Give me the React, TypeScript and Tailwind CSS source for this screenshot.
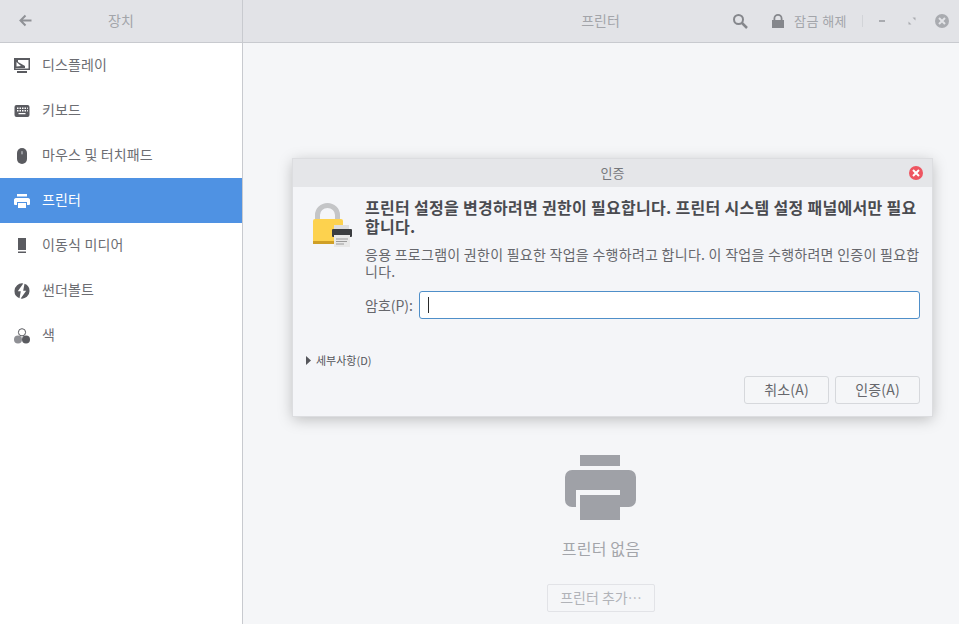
import { ReactNode } from "react";

const font = { fontFamily: '"Noto Sans CJK KR", "Noto Sans", sans-serif' };

const DisplayIcon = () => (
  <svg width="16" height="16" viewBox="0 0 16 16" fill="#5a5b60">
    <path fillRule="evenodd" d="M0 0h16v12H0zM1.500 1.500v9h13v-9z" />
    <path d="M1 1h14v1H4v2l7 4v2H1zM3 13h10v2H3z" />
    <path d="M2.500 4v4.500l4.500-0.500z" fill="#fff" />
  </svg>
);

const KeyboardIcon = () => (
  <svg width="16" height="16" viewBox="0 0 16 16">
    <rect x="0.500" y="2" width="15" height="12" rx="2" fill="#5a5b60" />
    <path
      d="M3 4.500h1.500v1.500H3zM5.500 4.500H7v1.500H5.500zM8 4.500h1.500v1.500H8zM10.500 4.500H12v1.500h-1.500zM13 4.500h.8v1.500H13zM3 7h1.500v1.500H3zM5.500 7H7v1.500H5.500zM8 7h1.500v1.500H8zM10.500 7H12v1.500h-1.500zM13 7h.8v1.500H13zM4.500 10h7v1.200h-7z"
      fill="#fff"
    />
  </svg>
);

const MouseIcon = () => (
  <svg width="16" height="16" viewBox="0 0 16 16">
    <rect x="3" y="0" width="10" height="16" rx="5" fill="#5a5b60" />
    <rect x="7.200" y="3" width="1.600" height="3.500" rx="0.800" fill="#a9abb0" />
  </svg>
);

const PrinterIcon = ({ color }: { color: string }) => (
  <svg width="16" height="16" viewBox="0 0 16 16" fill={color}>
    <path d="M3 1h10v2.500H3zM2 5h12a2 2 0 0 1 2 1.500V11a1 1 0 0 1-1 1h-2V9H3v3H1a1 1 0 0 1-1-1V6.500A2 2 0 0 1 2 5zM4 10h8v5H4z" />
  </svg>
);

const MediaIcon = () => (
  <svg width="16" height="16" viewBox="0 0 16 16" fill="#5a5b60">
    <path d="M4 0h8v12H4zM4 13.500h8V15H4z" />
  </svg>
);

const BoltIcon = () => (
  <svg width="16" height="16" viewBox="0 0 16 16" fill="#5a5b60">
    <path d="M9.300.500 3.800 8.300h3L5.500 15.300A7.500 7.500 0 0 1 .500 8 7.500 7.500 0 0 1 9.300.500zM10.500.800A7.500 7.500 0 0 1 15.500 8a7.500 7.500 0 0 1-8.800 7.500l5.500-7.800h-3z" />
  </svg>
);

const ColorIcon = () => (
  <svg width="16" height="16" viewBox="0 0 16 16">
    <circle cx="8" cy="4.300" r="3.600" fill="#fff" stroke="#5a5b60" />
    <circle cx="4" cy="11.500" r="4" fill="#8f9095" />
    <circle cx="12" cy="11.500" r="4" fill="#5a5b60" />
  </svg>
);

const SidebarRow = ({ icon, label, active }: { icon: ReactNode; label: string; active?: boolean }) => (
  <div
    className={`flex items-center h-[45px] pl-[14px] gap-3 text-[14px] tracking-[0.15px] ${
      active ? "bg-[#4f92e3] text-white" : "text-[#6c6d72]"
    }`}
  >
    {icon}
    <span className="-mt-[2px]">{label}</span>
  </div>
);

const DialogButton = ({ label }: { label: string }) => (
  <div className="flex items-center justify-center w-[85px] h-[28px] border border-[#d6d8dc] rounded-[3px] bg-[#f5f6f8] text-[14px] tracking-[0.2px] text-[#66676c]">
    {label}
  </div>
);

const App = () => {
  return (
    <div style={font} className="relative w-[959px] h-[624px] overflow-hidden bg-[#f5f6f8]">
      <div className="flex h-[43px] bg-[#e2e3e7] border-b border-[#c8cacf]">
        <div className="relative flex items-center justify-center w-[243px] pb-[2px] border-r border-[#c8cacf] text-[14px] text-[#a3a5aa]">
          <svg className="absolute left-[18px] top-[13px]" width="15" height="15" viewBox="0 0 15 15" fill="none" stroke="#8f9196" strokeWidth="2">
            <path d="M13.500 7.500H3M7.500 2.500l-5 5 5 5" />
          </svg>
          장치
        </div>
        <div className="relative flex-1 flex items-center justify-center pb-[2px] pr-[1px] text-[14px] text-[#a3a5aa]">
          프린터
          <div className="absolute right-[10px] top-0 h-[41px] flex items-center">
            <svg width="16" height="16" viewBox="0 0 16 16" fill="none" stroke="#85878c" strokeWidth="2">
              <circle cx="6.500" cy="6.500" r="4.500" />
              <path d="M10 10l5 5" strokeWidth="2.500" />
            </svg>
            <svg className="ml-[23px]" width="14" height="14" viewBox="0 0 14 14" fill="#85878c">
              <path fillRule="evenodd" d="M1 6h1.500V4.500a4.500 4.500 0 0 1 9 0V6H13v8H1zM4.300 6h5.400V4.500a2.700 2.700 0 0 0-5.400 0z" />
            </svg>
            <span className="ml-[9px] text-[13px] tracking-[0.45px] whitespace-nowrap text-[#a3a5aa] w-[55px]">잠금 해제</span>
            <div className="ml-[13px] w-px h-[12px] bg-[#d2d4d8]" />
            <div className="ml-[16px] w-[6px] h-[2px] bg-[#a9abb0]" />
            <svg className="ml-[23px]" width="8" height="8" viewBox="0 0 8 8" fill="#a9abb0">
              <path d="M4.500 0.500H7.500V3.500zM0.500 4.500L3.500 7.500H0.500z" />
            </svg>
            <div className="ml-[19px] flex items-center justify-center w-[14px] h-[14px] rounded-full bg-[#a9abb0]">
              <svg width="8" height="8" viewBox="0 0 8 8" stroke="#e2e3e7" strokeWidth="2">
                <path d="M1 1l6 6M7 1l-6 6" />
              </svg>
            </div>
          </div>
        </div>
      </div>

      <div className="flex h-[581px]">
        <div className="w-[243px] bg-white border-r border-[#c8cacf]">
          <SidebarRow icon={<DisplayIcon />} label="디스플레이" />
          <SidebarRow icon={<KeyboardIcon />} label="키보드" />
          <SidebarRow icon={<MouseIcon />} label="마우스 및 터치패드" />
          <SidebarRow icon={<PrinterIcon color="#ffffff" />} label="프린터" active />
          <SidebarRow icon={<MediaIcon />} label="이동식 미디어" />
          <SidebarRow icon={<BoltIcon />} label="썬더볼트" />
          <SidebarRow icon={<ColorIcon />} label="색" />
        </div>
        <div className="flex-1 flex flex-col items-center pt-[412px]">
          <svg width="72" height="66" viewBox="0 0 72 66" fill="#9fa1a7">
            <path d="M15 0h40v11H15zM7 15h57a7 7 0 0 1 7 7v23a7 7 0 0 1-7 7h-9V35H11v17H7a7 7 0 0 1-7-7V22a7 7 0 0 1 7-7zM15 40h40v25H15z" />
          </svg>
          <div className="mt-[15px] text-[16px] leading-[24px] tracking-[0.2px] text-[#a3a5aa]">프린터 없음</div>
          <div className="mt-[24px] pb-[2px] flex items-center justify-center w-[108px] h-[28px] border border-[#e2e3e7] rounded-[2px] text-[14px] text-[#b1b3b8]">
            프린터 추가…
          </div>
        </div>
      </div>

      <div className="absolute left-[293px] top-[159px] w-[639px] h-[257px] bg-[#f4f5f8] shadow-[0_0_0_1px_#dcdde0,0_3px_14px_rgba(0,0,0,0.25)]">
        <div className="relative flex items-center justify-center h-[28px] bg-[#e5e6e9] text-[13px] text-[#76777c]">
          인증
          <div className="absolute right-[9px] top-[7px] flex items-center justify-center w-[14px] h-[14px] rounded-full bg-[#ee5561]">
            <svg width="8" height="8" viewBox="0 0 8 8" stroke="#fff" strokeWidth="2">
              <path d="M1 1l6 6M7 1l-6 6" />
            </svg>
          </div>
        </div>
        <div className="flex pl-[19px] pr-[12px] pt-[11px]">
          <svg className="mt-[4px] shrink-0" width="41" height="46" viewBox="0 0 41 46">
            <path d="M3 20V13a12.500 12 0 0 1 25 0v7h-5V13a7.500 7 0 0 0-15 0v7z" fill="#c4c5c7" />
            <rect x="1" y="17" width="30" height="25" rx="2" fill="#fdd24e" />
            <rect x="1" y="39" width="30" height="3" fill="#cf9f26" />
            <rect x="22" y="23" width="15" height="6" fill="#dedede" />
            <rect x="20" y="27" width="20" height="8" rx="1" fill="#3b3d40" />
            <rect x="22" y="33" width="16" height="12" fill="#e8e8e8" />
            <path d="M24 37h12M24 39.500h11M24 42h8" stroke="#9a9a9a" />
          </svg>
          <div className="ml-[12px] flex-1">
            <div className="text-[16px] leading-[19px] font-bold tracking-[0.3px] text-[#4a4b50]">
              프린터 설정을 변경하려면 권한이 필요합니다. 프린터 시스템 설정 패널에서만 필요합니다.
            </div>
            <div className="mt-[10px] text-[14px] leading-[17px] tracking-[0.27px] text-[#66676c]">
              응용 프로그램이 권한이 필요한 작업을 수행하려고 합니다. 이 작업을 수행하려면 인증이 필요합니다.
            </div>
            <div className="mt-[11px] flex items-center">
              <span className="w-[54px] text-[14px] text-[#66676c]">암호(P):</span>
              <div className="flex items-center flex-1 h-[28px] pl-[8px] bg-white border border-[#4f8fc9] rounded-[3px]">
                <div className="w-px h-[16px] bg-[#2a2a2a]" />
              </div>
            </div>
          </div>
        </div>
        <div className="flex items-center mt-[33px] pl-[13px] text-[11px] text-[#55565b]">
          <svg width="5" height="9" viewBox="0 0 5 9" fill="#55565b">
            <path d="M0 0l5 4.500L0 9z" />
          </svg>
          <span className="ml-[5px]">세부사항(D)</span>
        </div>
        <div className="flex justify-end gap-[6px] mt-[7px] pr-[12px]">
          <DialogButton label="취소(A)" />
          <DialogButton label="인증(A)" />
        </div>
      </div>
    </div>
  );
};

export default App;
